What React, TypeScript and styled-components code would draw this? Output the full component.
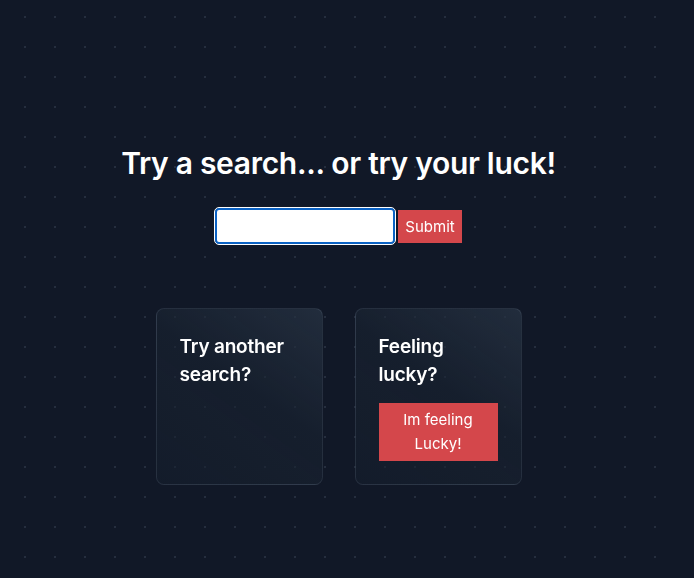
import React from "react";
import styled, { createGlobalStyle } from "styled-components";

const Global = createGlobalStyle`
  html, body {
    margin: 0;
    padding: 0;
    background-color: #111827;
  }
  body {
    font-family: "Inter", "Noto Sans", sans-serif;
    color: #ffffff;
  }
`;

const Page = styled.div`
  width: 677px;
  min-height: 578px;
  box-sizing: border-box;
  padding-top: 143px;
  display: flex;
  flex-direction: column;
  align-items: center;
  background-color: #111827;
  background-image: radial-gradient(circle, rgba(148, 163, 184, 0.16) 1px, transparent 1.3px);
  background-size: 30px 30px;
  background-position: 10px 2px;
`;

const Title = styled.h1`
  margin: 0;
  font-size: 30px;
  font-weight: 600;
  line-height: 40px;
  letter-spacing: -0.3px;
`;

const SearchForm = styled.form`
  margin-top: 25px;
  display: flex;
  align-items: center;
  gap: 3px;
`;

const SearchInput = styled.input`
  box-sizing: border-box;
  width: 180px;
  height: 36px;
  border: 2px solid #0b62c4;
  border-radius: 4px;
  background: #ffffff;
  outline: 1px solid #ffffff;
  padding: 0 5px;
  font-size: 16px;
`;

const RedButton = styled.button`
  border: none;
  background: #d4474b;
  color: #ffffff;
  font-family: "Inter", "Noto Sans", sans-serif;
  font-size: 15px;
  cursor: pointer;
  flex-shrink: 0;
`;

const SubmitButton = styled(RedButton)`
  height: 33px;
  padding: 0 7px;
`;

const Cards = styled.div`
  margin-top: 64px;
  display: flex;
  gap: 32px;
`;

const Card = styled.div`
  box-sizing: border-box;
  width: 167px;
  height: 177px;
  padding: 24px 23px;
  border: 1px solid rgba(148, 163, 184, 0.14);
  border-radius: 8px;
  background: linear-gradient(215deg, rgba(40, 52, 68, 0.75) 0%, rgba(26, 36, 50, 0.6) 45%, rgba(22, 32, 46, 0.55) 100%);
  display: flex;
  flex-direction: column;
  align-items: flex-start;
`;

const CardTitle = styled.h2`
  margin: 0;
  font-size: 19px;
  font-weight: 600;
  line-height: 28px;
  letter-spacing: -0.2px;
`;

const LuckyButton = styled(RedButton)`
  margin-top: 14px;
  width: 119px;
  height: 58px;
  line-height: 24px;
  padding: 0 10px;
`;

export default function App() {
  return (
    <>
      <Global />
      <Page>
        <Title>Try a search... or try your luck!</Title>
        <SearchForm onSubmit={(e) => e.preventDefault()}>
          <SearchInput autoFocus />
          <SubmitButton type="submit">Submit</SubmitButton>
        </SearchForm>
        <Cards>
          <Card>
            <CardTitle>
              Try another
              <br />
              search?
            </CardTitle>
          </Card>
          <Card>
            <CardTitle>
              Feeling
              <br />
              lucky?
            </CardTitle>
            <LuckyButton>Im feeling Lucky!</LuckyButton>
          </Card>
        </Cards>
      </Page>
    </>
  );
}
